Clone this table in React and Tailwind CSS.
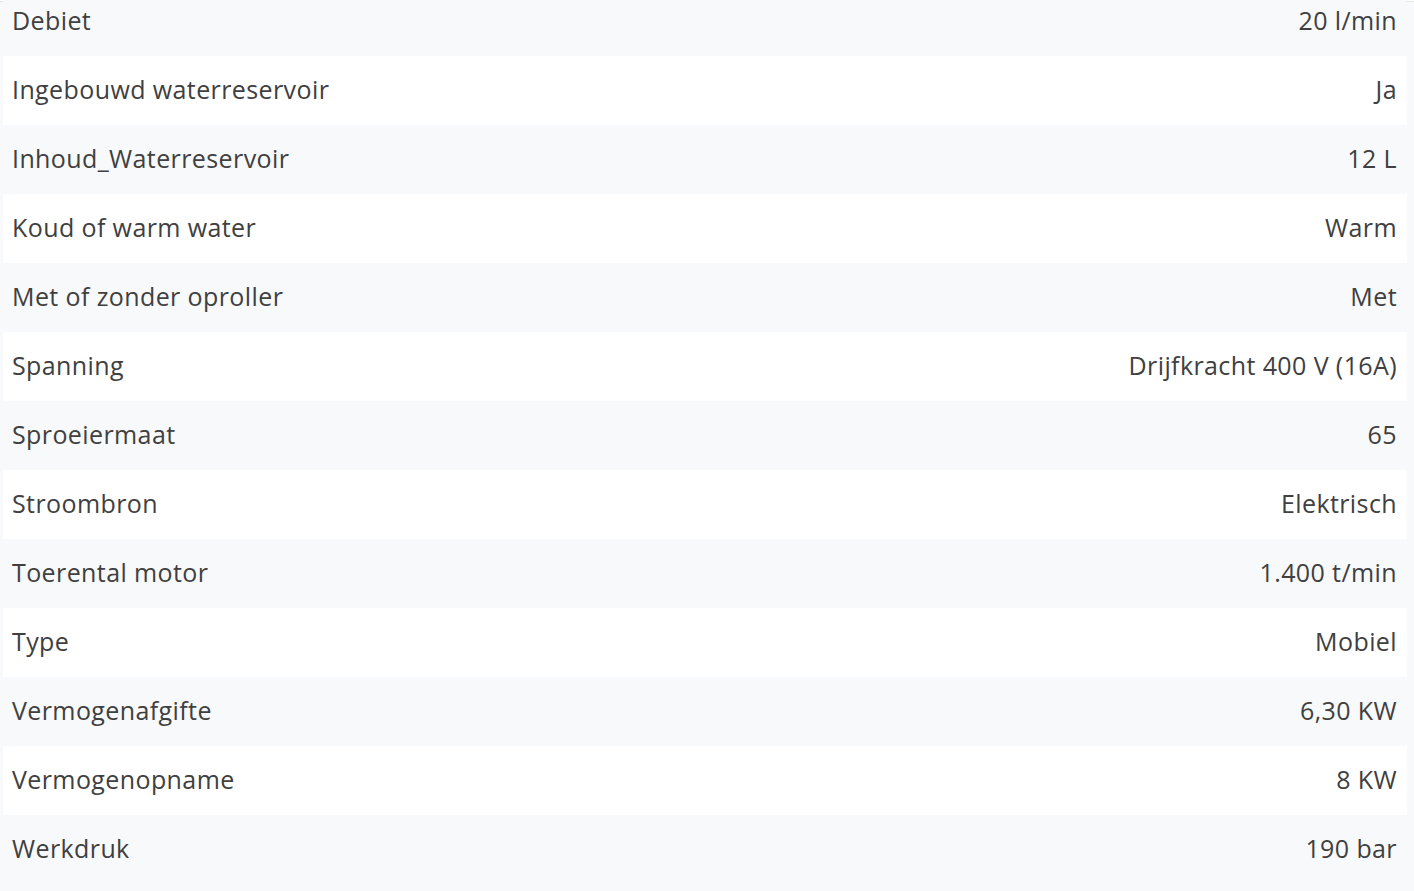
const specs = [
  ['Debiet', '20 l/min'],
  ['Ingebouwd waterreservoir', 'Ja'],
  ['Inhoud_Waterreservoir', '12 L'],
  ['Koud of warm water', 'Warm'],
  ['Met of zonder oproller', 'Met'],
  ['Spanning', 'Drijfkracht 400 V (16A)'],
  ['Sproeiermaat', '65'],
  ['Stroombron', 'Elektrisch'],
  ['Toerental motor', '1.400 t/min'],
  ['Type', 'Mobiel'],
  ['Vermogenafgifte', '6,30 KW'],
  ['Vermogenopname', '8 KW'],
  ['Werkdruk', '190 bar'],
]

export default function App() {
  return (
    <div className="h-[891px] overflow-hidden bg-[#f8f9fa] font-['Open_Sans',sans-serif] text-[#404040]">
      <div className="h-px bg-white" />
      <div className="h-px bg-[#e4e4e4]" />
      <div className="-mt-[15px]">
        {specs.map(([label, value], idx) => (
          <div
            key={label}
            className={`ml-[3px] mr-[7px] flex h-[69px] items-center justify-between pb-[2px] pl-[9px] pr-[10px] text-[25px] tracking-[0.4px] ${
              idx % 2 === 1 ? 'bg-white' : 'bg-[#f8f9fa]'
            }`}
          >
            <span>{label}</span>
            <span>{value}</span>
          </div>
        ))}
      </div>
    </div>
  )
}
